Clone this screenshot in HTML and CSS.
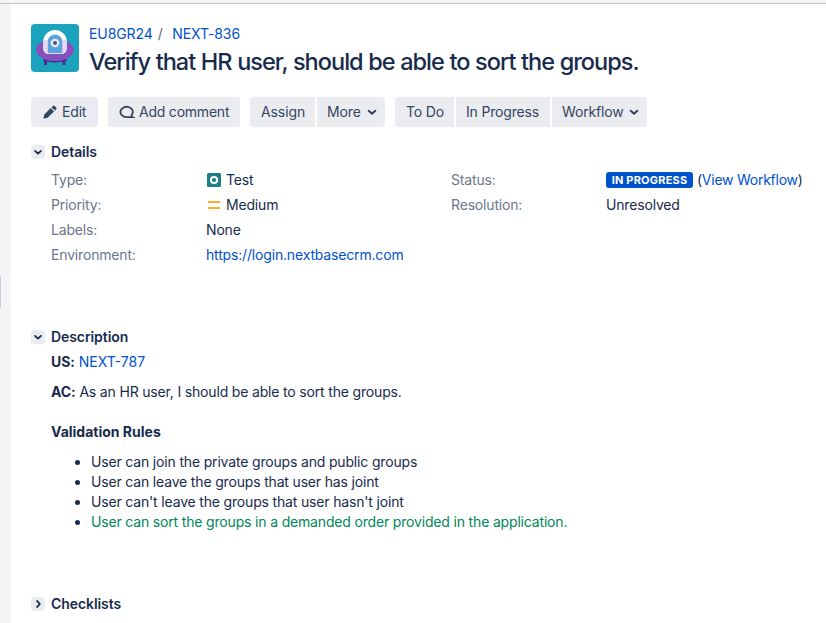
FILE: index.html
```html
<!DOCTYPE html>
<html lang="en">
<head>
<meta charset="utf-8">
<title>NEXT-836</title>
<link rel="stylesheet" href="styles.css">
</head>
<body>
<div class="topbar"></div>
<div class="shell">
<aside class="rail"><span class="handle"></span></aside>
<main class="issue">
  <header class="head">
    <svg class="avatar" viewBox="0 0 48 48">
      <rect width="48" height="48" rx="4" fill="#1ba3bd"/>
      <path d="M13 33h3v8h-3zM31.500 33h3v8h-3z" fill="#4c2c91"/>
      <path d="M12 35q12 4 24 0v1.500q-12 4-24 0z" fill="#4c2c91"/>
      <ellipse cx="24" cy="26" rx="19" ry="11" fill="#8650bd"/>
      <path d="M12.300 17.500a11.700 11.500 0 0 1 23.400 0V24q0 6-6 6h-11.400q-6 0-6-6z" fill="#fff"/>
      <path d="M12.300 16h23.400v8q0 6-6 6h-11.400q-6 0-6-6z" fill="#e2d8f1"/>
      <path d="M16.800 17.500a7.200 7 0 0 1 14.400 0V29h-14.400z" fill="#5ba4dc"/>
      <circle cx="24" cy="19" r="4.300" fill="#ece8f5"/><circle cx="24" cy="19" r="2" fill="#40549b"/>
    </svg>
    <div class="titles">
      <div class="crumbs"><a>EU8GR24</a><span class="slash">/</span><a>NEXT-836</a></div>
      <h1>Verify that HR user, should be able to sort the groups.</h1>
    </div>
  </header>
  <div class="toolbar">
    <div class="group"><button class="edit"><svg class="pencil" width="14" height="14" viewBox="0 0 14 14"><path d="M1.300 9.500 7.700 3.100 11 6.400 4.600 12.800.4 13.800zM8.500 2.300l1.400-1.400q.8-.8 1.600 0l1.700 1.700q.8.800 0 1.600l-1.400 1.400z"/></svg><span>Edit</span></button></div>
    <div class="group"><button class="comment"><svg class="bubble" width="16" height="14" viewBox="0 0 16 14"><path d="M12.600 10.100A6.200 5.200 0 1 0 7.500 12.200H13.800Q12.500 11.400 12.600 10.100Z"/></svg><span>Add comment</span></button></div>
    <div class="group"><button class="assign"><span>Assign</span></button><button class="more"><span>More</span><svg class="chev" width="10" height="7" viewBox="0 0 10 7"><path d="m1.700 1.700 3.300 3 3.300-3"/></svg></button></div>
    <div class="group"><button class="todo"><span>To Do</span></button><button class="progress"><span>In Progress</span></button><button class="workflow"><span>Workflow</span><svg class="chev" width="10" height="7" viewBox="0 0 10 7"><path d="m1.700 1.700 3.300 3 3.300-3"/></svg></button></div>
  </div>
  <section class="details">
    <h2><i class="toggle"><svg class="chev" width="10" height="7" viewBox="0 0 10 7"><path d="m1.700 1.700 3.300 3 3.300-3"/></svg></i><span>Details</span></h2>
    <div class="fields">
      <dl>
        <dt>Type:</dt><dd><svg class="kind" width="14" height="14" viewBox="0 0 14 14"><rect width="14" height="14" rx="1.500" fill="#1b7f86"/><circle cx="7" cy="7" r="3.100" fill="none" stroke="#fff" stroke-width="2"/></svg><span>Test</span></dd>
        <dt>Priority:</dt><dd><svg class="kind" width="14" height="14" viewBox="0 0 14 14"><path d="M1 3h12v2H1zM1 9h12v2H1z" fill="#ffab2e"/></svg><span>Medium</span></dd>
        <dt>Labels:</dt><dd>None</dd>
        <dt>Environment:</dt><dd><a>https://login.nextbasecrm.com</a></dd>
      </dl>
      <dl class="right">
        <dt>Status:</dt><dd><b class="badge">IN PROGRESS</b><span class="view">(<a>View Workflow</a>)</span></dd>
        <dt>Resolution:</dt><dd>Unresolved</dd>
      </dl>
    </div>
  </section>
  <section class="description">
    <h2><i class="toggle"><svg class="chev" width="10" height="7" viewBox="0 0 10 7"><path d="m1.700 1.700 3.300 3 3.300-3"/></svg></i><span>Description</span></h2>
    <div class="body">
      <p class="us"><b>US:</b> <a>NEXT-787</a></p>
      <p class="ac"><b>AC:</b> As an HR user, I should be able to sort the groups.</p>
      <p class="rules"><b>Validation Rules</b></p>
      <ul>
        <li>User can join the private groups and public groups</li>
        <li>User can leave the groups that user has joint</li>
        <li>User can't leave the groups that user hasn't joint</li>
        <li class="added">User can sort the groups in a demanded order provided in the application.</li>
      </ul>
    </div>
  </section>
  <section>
    <h2><i class="toggle"><svg class="chev" width="7" height="10" viewBox="0 0 7 10"><path d="m2 1.700 3 3.300-3 3.300"/></svg></i><span>Checklists</span></h2>
  </section>
</main>
</div>
</body>
</html>
```
FILE: styles.css
```css
* { box-sizing: border-box; }
body { margin: 0; height: 623px; overflow: hidden; background: #fff; color: #172b4d; font: 14px/20px Inter, sans-serif; letter-spacing: -0.17px; }
a { color: #0052cc; }
b { font-weight: 700; letter-spacing: 0; }
.topbar { height: 4px; background: #f4f5f7; border-bottom: 1px solid #c1c2c5; }
.shell { display: flex; height: 619px; }
.rail { width: 11px; flex: none; background: #f4f5f7; padding-top: 272px; }
.handle { display: block; width: 1px; height: 32px; background: #cdccda; }
.issue { flex: 1; padding: 20px 0 0 20px; white-space: nowrap; }
.head { display: flex; gap: 10px; height: 73px; }
.avatar { width: 48px; height: 48px; flex: none; }
.crumbs { display: flex; height: 20px; letter-spacing: -0.08px; }
.slash { width: 19.5px; padding-left: 5px; color: #5e6c84; }
h1 { margin: 4px 0 0; font-size: 23.5px; line-height: 28px; font-weight: 550; letter-spacing: -0.98px; word-spacing: 0.3px; }
.toolbar { display: flex; gap: 10px; height: 30px; }
.group { display: flex; gap: 2px; border-radius: 3px; overflow: hidden; }
button { display: flex; align-items: center; height: 30px; padding: 0 0 0 11px; border: 0; background: #ebecf0; color: #344563; font: inherit; letter-spacing: inherit; }
.edit { width: 67px; }
.comment { width: 132px; letter-spacing: -0.22px; }
.assign { width: 65px; letter-spacing: -0.1px; }
.more { width: 68px; padding-left: 10px; letter-spacing: -0.15px; }
.todo { width: 59px; }
.progress { width: 94px; padding-left: 10px; }
.workflow { width: 95px; padding-left: 10px; }
.pencil { margin: 0 5px 0 1px; fill: #344563; }
.bubble { margin-right: 4px; fill: none; stroke: #344563; stroke-width: 1.8; }
.chev { fill: none; stroke: #344563; stroke-width: 2; stroke-linecap: round; stroke-linejoin: round; }
button .chev { margin-left: auto; margin-right: 8px; }
h2 { display: flex; align-items: center; gap: 6px; margin: 0; height: 20px; font-size: 14px; font-weight: 600; line-height: 20px; letter-spacing: -0.08px; }
.toggle { display: flex; align-items: center; justify-content: center; width: 14px; height: 14px; border-radius: 3px; background: #ebecf0; }
.toggle .chev { stroke: #172b4d; transform: scale(.9); }
.details { margin-top: 15px; height: 185px; }
.fields { display: flex; padding: 8px 0 0 20px; }
dl { display: grid; grid-template-columns: 155px 244px; grid-auto-rows: 25px; margin: 0; }
dl.right { grid-template-columns: 155px auto; margin-left: 1px; }
dt { color: #6b778c; }
dd { display: flex; align-items: center; height: 20px; margin: 0; }
.kind { margin: 0 5px 0 1px; }
.badge { display: flex; align-items: center; justify-content: center; width: 87px; height: 16px; margin-right: 4px; border-radius: 3px; background: #0052cc; color: #fff; font-size: 11px; line-height: 16px; letter-spacing: 0.2px; }
.view { letter-spacing: -0.25px; }
.description { height: 267px; }
.body { padding: 5px 0 0 20px; }
p { margin: 0; }
.us { letter-spacing: 0; }
.us b, .ac b { letter-spacing: -0.1px; }
.ac { margin-top: 10px; }
.rules { margin-top: 20px; }
ul { margin: 10px 0 0; padding-left: 40px; }
.added { color: #00875a; }
.added::marker { color: #172b4d; }
```
